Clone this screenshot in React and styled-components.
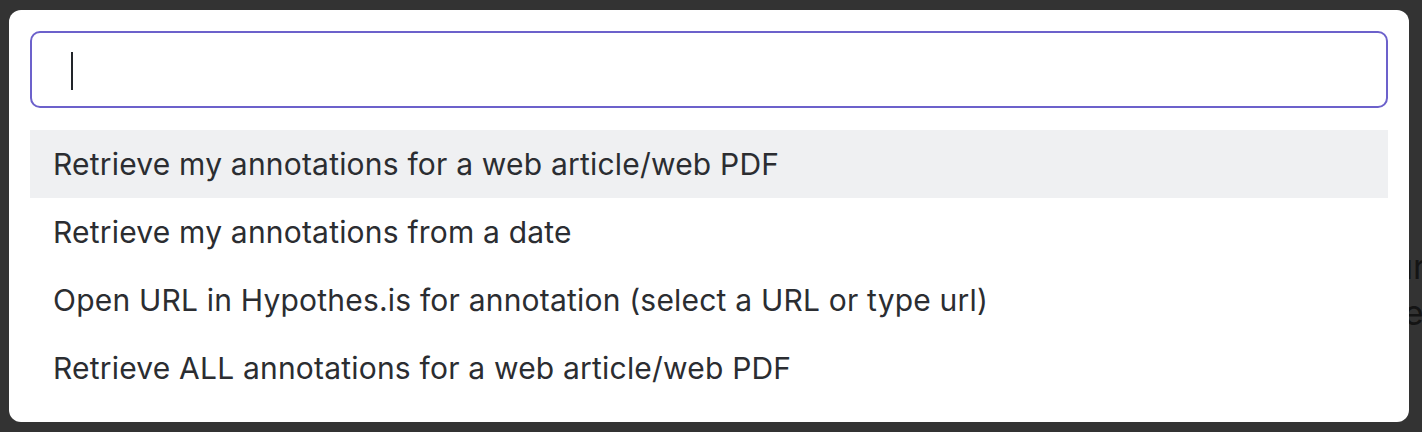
import React from "react";
import styled, { createGlobalStyle } from "styled-components";

const GlobalStyle = createGlobalStyle`
  html, body {
    margin: 0;
    padding: 0;
    background: #333333;
  }
  body {
    font-family: Inter, "Helvetica Neue", Arial, sans-serif;
  }
`;

const Page = styled.div`
  position: relative;
  width: 1422px;
  height: 432px;
  box-sizing: border-box;
  padding: 10px 13px 10px 9px;
  background: #333333;
  overflow: hidden;
`;

const UnderText = styled.div`
  position: absolute;
  left: 1393px;
  top: 244px;
  font-family: Inter, Arial, sans-serif;
  font-size: 34px;
  line-height: 46px;
  color: #141414;
  white-space: pre;
  z-index: 0;
`;

const Modal = styled.div`
  position: relative;
  z-index: 1;
  height: 100%;
  box-sizing: border-box;
  background: #ffffff;
  border-radius: 12px;
  padding: 21px 21px 20px 21px;
  display: flex;
  flex-direction: column;
  gap: 22px;
`;

const SearchBox = styled.div`
  height: 77px;
  box-sizing: border-box;
  border: 2px solid #6c61cb;
  border-radius: 10px;
  display: flex;
  align-items: center;
  padding-left: 39px;
`;

const Caret = styled.span`
  display: block;
  width: 2px;
  height: 38px;
  margin-top: 3px;
  background: #22252a;
`;

const List = styled.ul`
  list-style: none;
  margin: 0;
  padding: 0;
  display: flex;
  flex-direction: column;
`;

const Item = styled.li`
  height: 68px;
  display: flex;
  align-items: center;
  padding-left: 23px;
  font-size: 30px;
  letter-spacing: 0.2px;
  color: #2b2d31;
  background: ${(p) => (p.$active ? "#eff0f2" : "transparent")};
  white-space: nowrap;
`;

const items = [
  "Retrieve my annotations for a web article/web PDF",
  "Retrieve my annotations from a date",
  "Open URL in Hypothes.is for annotation (select a URL or type url)",
  "Retrieve ALL annotations for a web article/web PDF",
];

export default function App() {
  return (
    <>
      <GlobalStyle />
      <Page>
        <UnderText>{"ur\nte"}</UnderText>
        <Modal>
          <SearchBox>
            <Caret />
          </SearchBox>
          <List>
            {items.map((t, i) => (
              <Item key={t} $active={i === 0}>
                {t}
              </Item>
            ))}
          </List>
        </Modal>
      </Page>
    </>
  );
}
